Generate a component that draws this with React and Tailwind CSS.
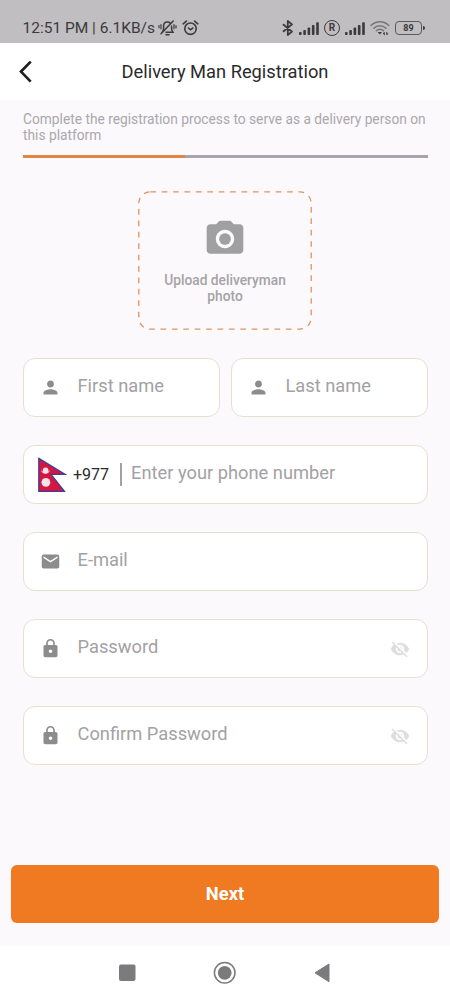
import { MdPerson, MdEmail, MdLock, MdVisibilityOff, MdCameraAlt } from "react-icons/md";

function SignalBars() {
  return (
    <svg width="20" height="13" viewBox="0 0 20 13" fill="#3c3a3d">
      <rect x="0" y="10" width="2.6" height="3" rx="0.8" />
      <rect x="4.3" y="8" width="2.6" height="5" rx="0.8" />
      <rect x="8.6" y="5.5" width="2.6" height="7.5" rx="0.8" />
      <rect x="12.9" y="3" width="2.6" height="10" rx="0.8" />
      <rect x="17.2" y="0.3" width="2.6" height="12.7" rx="0.8" />
    </svg>
  );
}

function Bluetooth() {
  return (
    <svg width="12" height="16" viewBox="0 0 12 16" fill="none" stroke="#3c3a3d" strokeWidth="1.8" strokeLinejoin="round">
      <path d="M1 4.2 L10 11.6 L5.8 15 V1 L10 4.4 L1 11.8" />
    </svg>
  );
}

function MutedBell() {
  return (
    <svg className="ml-[3px]" width="19" height="16" viewBox="0 0 19 16" fill="none" stroke="#3c3a3d" strokeWidth="1.5" strokeLinecap="round">
      <path d="M4.4 12 L5.6 9.6 V6 C5.6 3.4 7.2 2 9.4 2 C10.8 2 11.7 2.4 12.4 3.2 M13.6 6 V9.6 L15 12.2 H8" />
      <path d="M15.2 1 L3 13.8 M8 14.8 H11" />
      <path d="M3 4.6 V8.8 M1 5.6 V7.8 M16 4.6 V8.8 M18 5.6 V7.8" strokeWidth="1.2" />
    </svg>
  );
}

function AlarmClock() {
  return (
    <svg className="ml-[5px]" width="17" height="16" viewBox="0 0 17 16" fill="none" stroke="#3c3a3d" strokeWidth="1.6" strokeLinecap="round">
      <circle cx="8.5" cy="8.7" r="5.7" />
      <path d="M1.2 3.8 L4.4 1.1 M15.8 3.8 L12.6 1.1 M6.4 8 L8.5 9.8 L10.8 8" />
    </svg>
  );
}

function Wifi() {
  return (
    <svg className="ml-[5px]" width="20" height="16" viewBox="0 0 20 16" fill="none" strokeLinecap="round">
      <path d="M1 5.5 C6 0.4 14 0.4 18.8 5.5" stroke="#777478" strokeWidth="1.5" />
      <path d="M3.8 8.3 C7.4 4.9 12.4 4.9 16 8.3" stroke="#777478" strokeWidth="1.5" />
      <path d="M6.3 10.8 C8.4 8.8 11.4 8.8 13.5 10.8" stroke="#777478" strokeWidth="1.5" />
      <path d="M7.6 12 H12 L9.8 14.6 Z" fill="#3c3a3d" />
      <path d="M14.3 14.8 V12.4 L13.4 13.6 M16.8 12.4 V14.8 L17.7 13.6" stroke="#3c3a3d" strokeWidth="1" />
    </svg>
  );
}

function StatusBar() {
  return (
    <div className="flex h-[43px] items-end bg-[#c0bec1] pb-[7px] pl-[22.5px] pr-[25px] text-[#3c3a3d]">
      <div className="flex h-4 items-center">
        <span className="whitespace-nowrap text-[15.5px] leading-4">12:51 PM | 6.1KB/s</span>
        <MutedBell />
        <AlarmClock />
      </div>
      <div className="ml-auto flex h-4 items-center">
        <Bluetooth />
        <span className="ml-[5px]"><SignalBars /></span>
        <span className="ml-[5px] flex size-4 items-center justify-center rounded-full border-[1.5px] border-[#3c3a3d] text-[10px] font-bold leading-none">R</span>
        <span className="ml-[5px]"><SignalBars /></span>
        <Wifi />
        <span className="ml-[5px] flex h-[14px] w-[27px] items-center justify-center rounded-[4px] border-[1.5px] border-[#5b595c] text-[9px] font-bold leading-none">89</span>
        <span className="ml-px h-1 w-[2px] rounded-r bg-[#3c3a3d]" />
      </div>
    </div>
  );
}

function Field({ icon: Icon, label, secret }) {
  return (
    <div className="flex h-[59px] min-w-0 flex-1 items-center rounded-[12px] border border-[#e6e0cf] bg-white pr-[17px]">
      <span className="ml-[16.5px] flex w-[21px] justify-center"><Icon size={21} color="#8c8c8d" /></span>
      <span className="ml-[16.5px] whitespace-nowrap pb-[3px] text-[18.3px] leading-6 text-[#a3a1a4]">{label}</span>
      {secret && <MdVisibilityOff className="ml-auto" size={20} color="#dfdde1" />}
    </div>
  );
}

function NepalFlag() {
  return (
    <svg width="29" height="36" viewBox="0 0 29 36">
      <path d="M0.8 1.4 L27 17.3 H13 L26.5 34.4 H0.8 Z" fill="#d5173f" stroke="#3b3f98" strokeWidth="1.3" />
      <path d="M3 13 C5 16 10 16 12 13 C11 18 4 18 3 13 Z" fill="#f6dfe8" />
      <circle cx="7.6" cy="13.4" r="2.8" fill="#f6dfe8" />
      <circle cx="7.9" cy="25.3" r="4.4" fill="#f9e3eb" />
    </svg>
  );
}

export default function App() {
  return (
    <div className="flex h-[1000px] w-[450px] flex-col bg-[#fbf9fc] font-['Roboto',sans-serif]">
      <StatusBar />
      <header className="relative flex h-[57px] items-center justify-center bg-white">
        <svg className="absolute left-[18px] top-[17px]" width="15" height="23" viewBox="0 0 15 23" fill="none" stroke="#1e1e1f" strokeWidth="2.7">
          <path d="M12.7 1.6 L3 11.6 L12.7 21.6" />
        </svg>
        <h1 className="text-[18.3px] leading-6 text-[#2b2a2c]">Delivery Man Registration</h1>
      </header>
      <main className="flex flex-1 flex-col px-[22.5px]">
        <p className="mt-[11px] whitespace-nowrap pl-[0.5px] text-[13.75px] leading-4 text-[#aaa8ab]">
          Complete the registration process to serve as a delivery person on
          <br />
          this platform
        </p>
        <div className="mt-[12px] flex h-[2.5px] bg-[#a9a3ad]">
          <div className="w-[40%] bg-[#e08542]" />
        </div>
        <div className="relative mt-[33.5px] flex h-[139px] w-[174px] flex-col items-center self-center">
          <svg className="absolute inset-0" width="174" height="139" fill="none">
            <rect x="0.8" y="0.8" width="172.4" height="137.4" rx="11.5" stroke="#e0935c" strokeWidth="1.3" strokeDasharray="5.7 5.7" />
          </svg>
          <MdCameraAlt className="mt-[25.5px]" size={44} color="#a0a0a3" />
          <p className="mt-[11px] text-center text-[13.75px] font-medium leading-4 text-[#a5a3a6]">
            Upload deliveryman
            <br />
            photo
          </p>
        </div>
        <div className="mt-[28px] flex flex-col gap-[28.1px]">
          <div className="flex gap-[11px]">
            <Field icon={MdPerson} label="First name" />
            <Field icon={MdPerson} label="Last name" />
          </div>
          <div className="flex h-[59px] items-center rounded-[12px] border border-[#e6e0cf] bg-white pl-[14.5px]">
            <NepalFlag />
            <span className="ml-[6px] text-[16px] text-[#2b2a2c]">+977</span>
            <span className="ml-[11px] h-[23px] w-[2px] bg-[#a3a1a4]" />
            <span className="ml-[9px] whitespace-nowrap pb-[3px] text-[18.3px] leading-6 text-[#a3a1a4]">Enter your phone number</span>
          </div>
          <div className="flex"><Field icon={MdEmail} label="E-mail" /></div>
          <div className="flex"><Field icon={MdLock} label="Password" secret /></div>
          <div className="flex"><Field icon={MdLock} label="Confirm Password" secret /></div>
        </div>
      </main>
      <button className="mx-[11px] mb-[23px] h-[58px] shrink-0 rounded-[6px] bg-[#f07a21] text-[18.3px] font-bold text-white">Next</button>
      <nav className="flex h-[54px] shrink-0 items-center bg-white">
        <svg width="450" height="54" fill="#7b7a7c">
          <rect x="119" y="18.5" width="16.5" height="16.5" rx="2" />
          <circle cx="224.7" cy="26.8" r="10.3" fill="none" stroke="#7b7a7c" strokeWidth="1.5" />
          <circle cx="224.7" cy="26.8" r="6.9" />
          <path d="M315 26.8 L329 18 V35.8 Z" stroke="#7b7a7c" strokeLinejoin="round" />
        </svg>
      </nav>
    </div>
  );
}
